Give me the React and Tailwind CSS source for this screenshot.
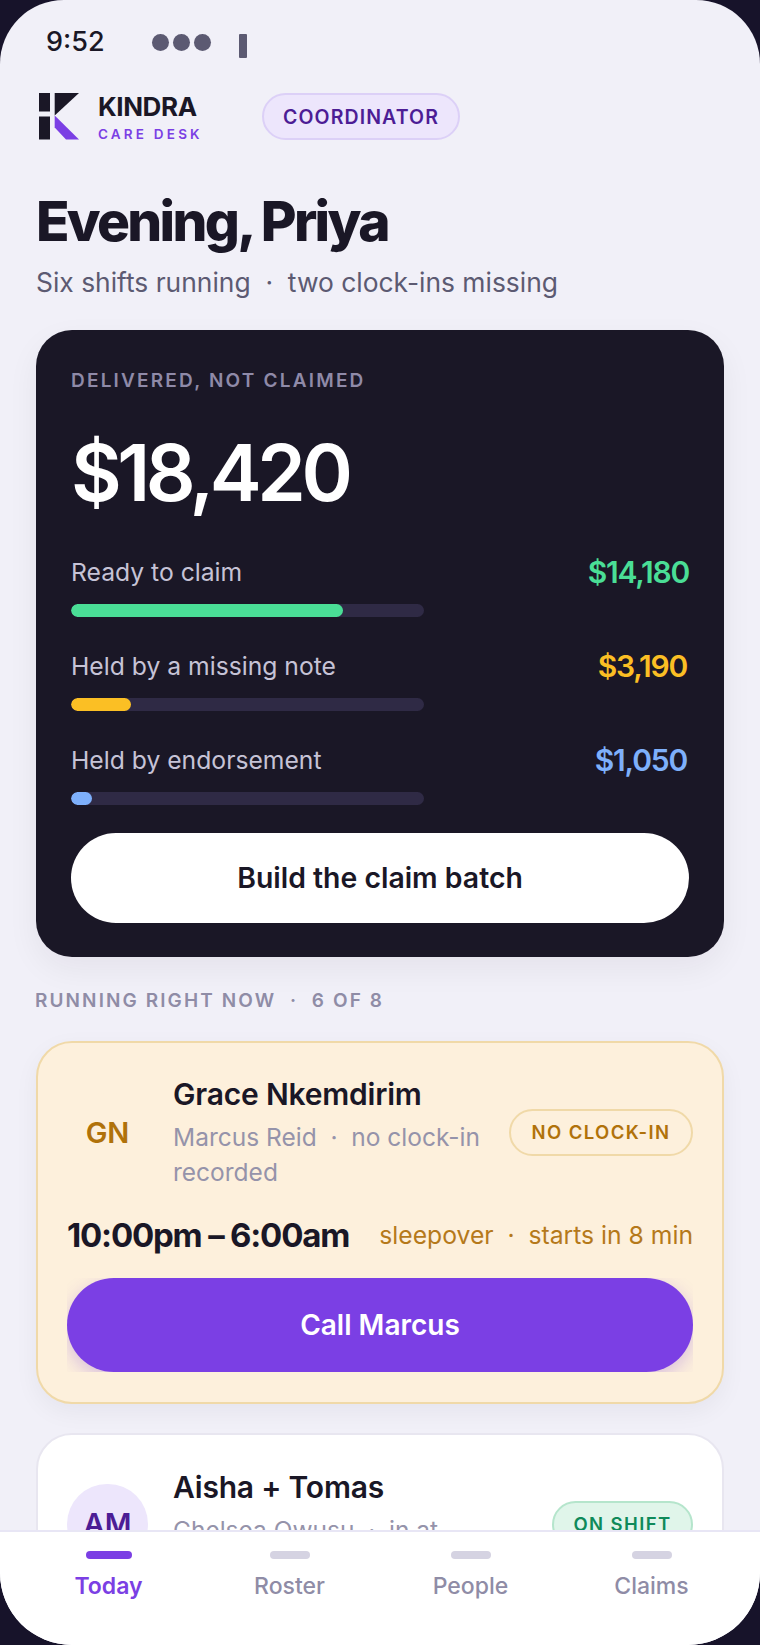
import React from "react";

const inter = "font-['Inter',sans-serif]";

function Logo() {
  return (
    <svg width="42" height="47" viewBox="0 0 42 47" className="shrink-0">
      <rect x="0" y="0" width="11" height="18.5" fill="#1a1726" />
      <rect x="0" y="23.5" width="11" height="23" fill="#1a1726" />
      <path d="M15.7 0H40L15.7 22.5Z" fill="#1a1726" />
      <path d="M15.7 22.5L40 46.5H27L15.7 34.5Z" fill="#7b3fe4" />
    </svg>
  );
}

function Meter({ label, value, color, textColor, pct, mt, inset }) {
  return (
    <div className={mt}>
      <div className="flex items-center justify-between h-[36px]">
        <span className="text-[24.7px] leading-[36px] font-normal text-[#c6c3d6]">{label}</span>
        <span className={`text-[30px] leading-[36px] font-semibold tracking-[-1.2px] ${textColor} ${inset}`}>{value}</span>
      </div>
      <div className="mt-[14px] w-[353px] h-[13px] rounded-full bg-[#2f2a45] overflow-hidden">
        <div className={`h-full rounded-full ${color}`} style={{ width: `${pct}%` }} />
      </div>
    </div>
  );
}

function Tab({ label, active }) {
  return (
    <div className="flex-1 flex flex-col items-center">
      <div className={active ? "w-[46px] h-[8px] rounded-full bg-[#7b3fe4]" : "w-[40px] h-[8px] rounded-full bg-[#d5d3e2]"} />
      <span className={active ? "mt-[10px] text-[23px] leading-[34px] font-semibold text-[#7b3fe4]" : "mt-[10px] text-[23px] leading-[34px] font-medium text-[#8f8ca6]"}>{label}</span>
    </div>
  );
}

export default function App() {
  return (
    <div className={`${inter} w-[760px] h-[1645px] bg-[#17132a] overflow-hidden`}>
      <div className="w-[760px] h-[1645px] rounded-t-[64px] rounded-b-[72px] bg-[#f1f0f8] overflow-hidden flex flex-col">
        <div className="h-[1530px] shrink-0 overflow-hidden px-[36px]">
          {/* status bar */}
          <div className="h-[84px] flex items-center relative">
            <div className="flex items-center pl-[10px] h-full">
              <span className="text-[27px] leading-none font-medium text-[#1a1726] w-[106px] mb-[2px]">9:52</span>
              <div className="flex gap-[4px]">
                <span className="w-[17px] h-[17px] rounded-full bg-[#5c5a72]" />
                <span className="w-[17px] h-[17px] rounded-full bg-[#5c5a72]" />
                <span className="w-[17px] h-[17px] rounded-full bg-[#5c5a72]" />
              </div>
              <span className="ml-[28px] mt-[8px] w-[8px] h-[24px] rounded-[1px] bg-[#5c5a72]" />
            </div>
          </div>

          {/* brand row */}
          <div className="flex items-center h-[47px] mt-[9px] pl-[3px]">
            <Logo />
            <div className="ml-[17px] w-[114px]">
              <div className="text-[26px] leading-[28px] font-bold tracking-[-0.4px] text-[#1a1726]">KINDRA</div>
              <div className="mt-[4px] -mb-[2px] text-[13.5px] leading-[18px] font-semibold tracking-[3.2px] text-[#7b3fe4] whitespace-nowrap">CARE DESK</div>
            </div>
            <div className="ml-[50px] h-[47px] w-[198px] pt-[3px] rounded-full border-2 border-[#dcd0f7] bg-[#ede6fc] flex items-center justify-center text-[19.5px] font-semibold tracking-[1.1px] text-[#4c1d95]">
              COORDINATOR
            </div>
          </div>

          {/* greeting */}
          <h1 className="mt-[49px] text-[55px] leading-[64px] font-extrabold tracking-[-2.7px] text-[#1a1726]">Evening, Priya</h1>
          <p className="mt-[10px] text-[26.4px] leading-[38px] text-[#5c5a72] whitespace-pre">Six shifts running  ·  two clock-ins missing</p>

          {/* hero card */}
          <section className="mt-[29px] h-[627px] rounded-[36px] bg-[#1a1726] px-[35px] pt-[36px] shadow-[0_12px_32px_rgba(26,23,38,0.06)]">
            <div className="text-[19px] leading-[30px] font-semibold tracking-[2.2px] text-[#8f8aa8]">DELIVERED, NOT CLAIMED</div>
            <div className="mt-[29px] text-[78px] leading-[96px] font-semibold tracking-[-4.5px] text-white">$18,420</div>
            <Meter mt="mt-[33px]" label="Ready to claim" value="$14,180" color="bg-[#4ade96]" textColor="text-[#4ade96]" pct={77} inset="" />
            <Meter mt="mt-[31px]" label="Held by a missing note" value="$3,190" color="bg-[#fbbf24]" textColor="text-[#fbbf24]" pct={17} inset="pr-[2px]" />
            <Meter mt="mt-[31px]" label="Held by endorsement" value="$1,050" color="bg-[#7eb0fb]" textColor="text-[#7eb0fb]" pct={6} inset="pr-[2px]" />
            <button className="mt-[28px] w-full h-[90px] rounded-full bg-white text-[28.4px] font-semibold text-[#1a1726]">Build the claim batch</button>
          </section>

          <div className="mt-[29px] -ml-[1px] h-[30px] text-[19px] leading-[30px] font-semibold tracking-[2.1px] text-[#8f8ca6] whitespace-pre">RUNNING RIGHT NOW  ·  6 OF 8</div>

          {/* alert shift */}
          <section className="mt-[25px] h-[363px] rounded-[36px] border-2 border-[#f0d9a8] bg-[#fdf0dc] px-[29px] pt-[32px] shadow-[0_8px_24px_rgba(26,23,38,0.05)]">
            <div className="flex items-center">
              <div className="w-[81px] h-[80px] shrink-0 rounded-full bg-[#fdf0dc] flex items-center justify-center text-[29px] font-semibold text-[#b0720a]">GN</div>
              <div className="ml-[25px] w-[313px] shrink-0">
                <div className="text-[30px] leading-[38px] font-semibold text-[#1a1726] tracking-[-0.2px]">Grace Nkemdirim</div>
                <div className="mt-[7px] text-[24.5px] leading-[35px] text-[#9593aa] whitespace-pre">{"Marcus Reid  ·  no clock-in\nrecorded"}</div>
              </div>
              <div className="ml-auto shrink-0 h-[47px] w-[184px] rounded-full border-2 border-[#f0d9a8] flex items-center justify-center text-[18.5px] font-semibold tracking-[1.4px] text-[#b0720a]">NO CLOCK-IN</div>
            </div>
            <div className="mt-[25px] flex items-center justify-between h-[40px]">
              <span className="text-[33px] leading-[40px] font-bold tracking-[-1.2px] text-[#1a1726]">10:00pm – 6:00am</span>
              <span className="text-[24.7px] leading-[40px] text-[#b5791a] whitespace-pre">sleepover  ·  starts in 8 min</span>
            </div>
            <div className="mt-[23px] overflow-hidden">
              <button className="w-full h-[94px] rounded-full bg-[#7b3fe4] text-[28px] font-semibold text-white shadow-[0_6px_18px_rgba(123,63,228,0.28)]">Call Marcus</button>
            </div>
          </section>

          {/* second shift */}
          <section className="mt-[29px] h-[362px] rounded-[36px] border-2 border-[#e8e6f0] bg-white px-[29px] pt-[33px]">
            <div className="flex items-center">
              <div className="w-[81px] h-[80px] mb-[4px] shrink-0 rounded-full bg-[#ede6fc] flex items-center justify-center text-[29px] font-semibold text-[#4c1d95]">AM</div>
              <div className="ml-[25px] w-[313px] h-[115px] shrink-0">
                <div className="text-[30px] leading-[38px] font-semibold text-[#1a1726] tracking-[-0.2px]">Aisha + Tomas</div>
                <div className="mt-[7px] text-[24.5px] leading-[35px] text-[#9593aa] whitespace-pre">Chelsea Owusu  ·  in at</div>
              </div>
              <div className="ml-auto mb-[2px] shrink-0 h-[47px] w-[141px] rounded-full border-2 border-[#b5e5cc] bg-[#e0f5ea] flex items-center justify-center text-[18.5px] font-semibold tracking-[1.4px] text-[#0f8a5a]">ON SHIFT</div>
            </div>
          </section>
        </div>

        {/* tab bar */}
        <nav className="flex-1 border-t-2 border-[#e8e6f5] bg-white px-[18px] pt-[19px] flex">
          <Tab label="Today" active />
          <Tab label="Roster" />
          <Tab label="People" />
          <Tab label="Claims" />
        </nav>
      </div>
    </div>
  );
}
